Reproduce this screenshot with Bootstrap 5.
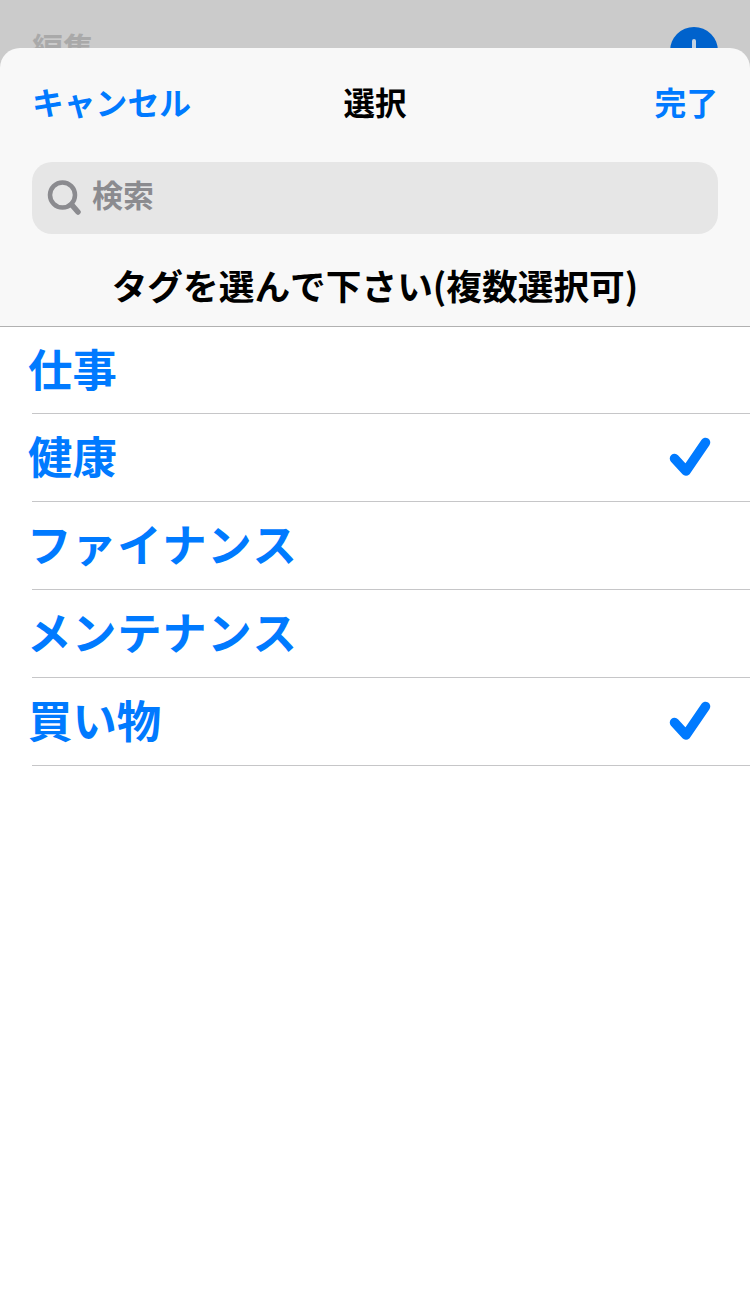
<!DOCTYPE html>
<html lang="ja"><head><meta charset="utf-8">
<link href="https://cdn.jsdelivr.net/npm/bootstrap@5.3.0/dist/css/bootstrap.min.css" rel="stylesheet">
<style>
html,body{height:100%;}
body{background:#fff;font-family:"Noto Sans CJK JP","Liberation Sans",sans-serif;overflow:hidden;font-kerning:none;}
.backdrop{background:#cbcbcb;height:68px;margin-bottom:-20px;padding:27px 32px 0;overflow:hidden;}
.edit-txt{font-size:31px;font-weight:700;color:#a9a9a9;line-height:40px;}
.plus-dot{width:48px;height:48px;border-radius:50%;background:#0062cc;position:relative;flex:none;}
.plus-dot::before{content:"";position:absolute;left:22px;top:12px;width:4px;height:24px;border-radius:2px;background:#c5d3e2;}
.sheet-top{background:#f8f8f8;border-radius:20px 20px 0 0;border-bottom:1px solid #b1b1b1;height:279px;position:relative;}
.title-row{height:108px;margin-bottom:6px;padding:0 32px;}
.title-row>*{flex:1 1 0;}
.act{font-size:31.8px;font-weight:700;color:#007aff;line-height:1;white-space:nowrap;}
.ttl{font-size:31.5px;font-weight:700;color:#000;line-height:1;text-align:center;}
.search-box{margin:0 32px;height:72px;background:#e6e6e6;border-radius:20px;padding-left:15px;gap:11px;}
.search-ph{font-size:31px;font-weight:700;color:#8b8b8f;line-height:1;margin-bottom:9px;}
.prompt{font-size:35.7px;font-weight:700;color:#000;text-align:center;line-height:1;margin-top:33px;}
.tag-row{height:88px;margin-left:32px;border-bottom:1px solid #c6c6c8;padding-right:39px;}
.sheet-top + .tag-row{height:87px;}
.tag-name{font-size:44.4px;font-weight:700;color:#007aff;margin-left:-4px;margin-bottom:4px;line-height:1;}
.kana-name{letter-spacing:.7px;margin-left:-5px;}
</style></head><body>
<div class="backdrop d-flex justify-content-between align-items-start">
<span class="edit-txt">編集</span><span class="plus-dot"></span>
</div>
<div class="sheet-top">
<div class="title-row d-flex justify-content-between align-items-center"><span class="act">キャンセル</span><span class="ttl">選択</span><span class="act text-end">完了</span></div>
<div class="search-box d-flex align-items-center">
<svg width="34" height="36" viewBox="0 0 34 36"><circle cx="15.5" cy="15" r="12.5" fill="none" stroke="#8b8b8f" stroke-width="4.5"/><path d="M24.5 24.5l6.500 7.500" stroke="#8b8b8f" stroke-width="5.500" stroke-linecap="round"/></svg>
<span class="search-ph">検索</span></div>
<div class="prompt">タグを選んで下さい(複数選択可)</div>
</div>
<div class="tag-row d-flex justify-content-between align-items-center"><span class="tag-name">仕事</span></div>
<div class="tag-row d-flex justify-content-between align-items-center"><span class="tag-name">健康</span><svg width="42" height="42" viewBox="0 0 42 42"><path d="M5.500 21.500L17 34 36.500 5.500" fill="none" stroke="#007aff" stroke-width="9.500" stroke-linecap="round" stroke-linejoin="round"/></svg></div>
<div class="tag-row d-flex justify-content-between align-items-center"><span class="tag-name kana-name">ファイナンス</span></div>
<div class="tag-row d-flex justify-content-between align-items-center"><span class="tag-name kana-name">メンテナンス</span></div>
<div class="tag-row d-flex justify-content-between align-items-center"><span class="tag-name">買い物</span><svg width="42" height="42" viewBox="0 0 42 42"><path d="M5.500 21.500L17 34 36.500 5.500" fill="none" stroke="#007aff" stroke-width="9.500" stroke-linecap="round" stroke-linejoin="round"/></svg></div>
<script src="https://cdn.jsdelivr.net/npm/bootstrap@5.3.0/dist/js/bootstrap.bundle.min.js"></script>
</body></html>
